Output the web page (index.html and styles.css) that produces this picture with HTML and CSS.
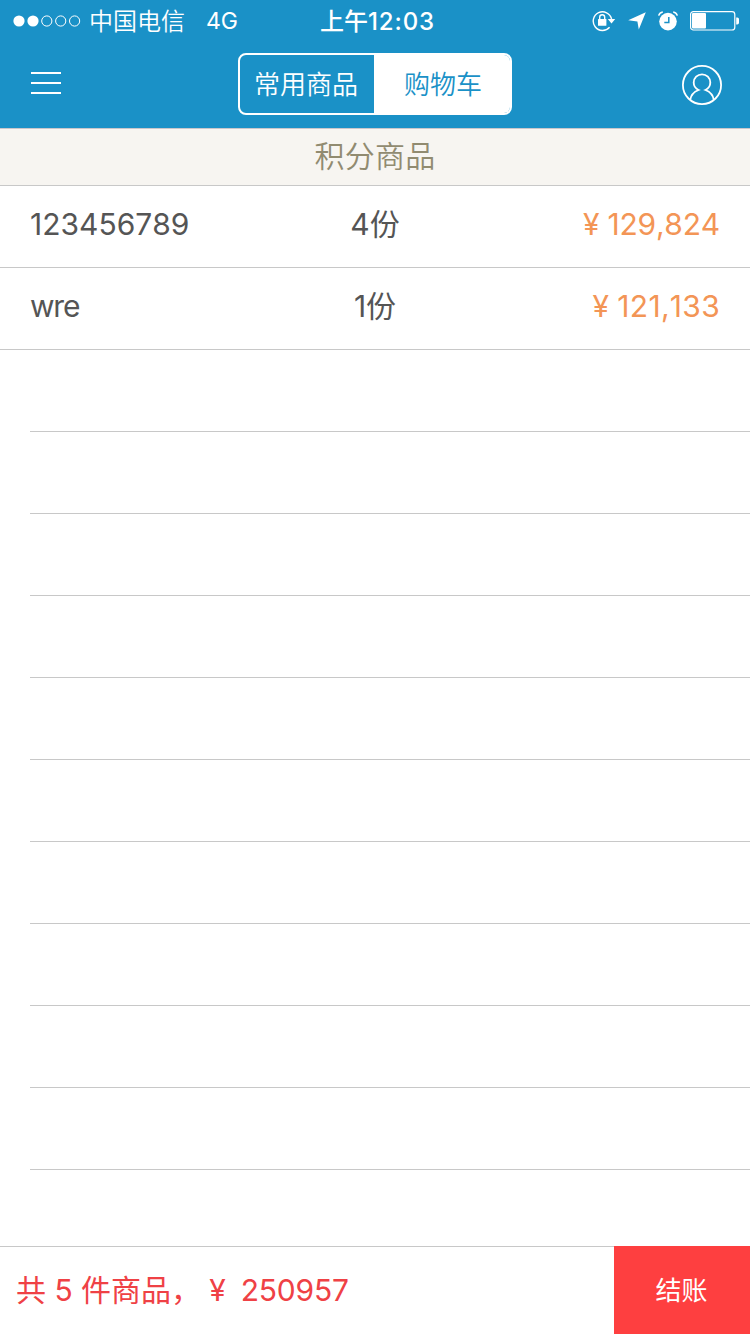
FILE: index.html
```
<!DOCTYPE html>
<html lang="zh-CN">
<head>
    <meta charset="UTF-8">
    <meta name="viewport" content="width=device-width, initial-scale=1.0">
    <title>购物车</title>
    <link rel="stylesheet" href="styles.css">
</head>
<body>
    <header class="header">
        <div class="status-bar">
            <div class="status-left">
                <svg class="signal" width="68" height="12" viewBox="0 0 68 12" fill="none" stroke="#fff">
                    <circle cx="6" cy="6" r="5.6" fill="#fff" stroke="none"/>
                    <circle cx="20" cy="6" r="5.6" fill="#fff" stroke="none"/>
                    <circle cx="33.8" cy="6" r="5.1"/>
                    <circle cx="47.7" cy="6" r="5.1"/>
                    <circle cx="61.6" cy="6" r="5.1"/>
                </svg>
                <span class="carrier">中国电信</span>
                <span class="network">4G</span>
            </div>
            <div class="time">上午<span class="clock">12:03</span></div>
            <div class="status-right">
                <svg class="icon-lock" width="24" height="22" viewBox="0 0 24 22">
                    <path d="M17.6 17.2A9.3 9.3 0 1 1 19.6 9" fill="none" stroke="#fff" stroke-width="1.4"/>
                    <path d="M15.8 9h7.4l-3.7 4.4z" fill="#fff"/>
                    <rect x="6" y="9" width="8.4" height="6.8" rx="0.6" fill="#fff"/>
                    <path d="M7.7 9.5V7.2a2.5 2.5 0 0 1 5 0v2.3" fill="none" stroke="#fff" stroke-width="1.4"/>
                </svg>
                <svg class="icon-location" width="18" height="18" viewBox="0 0 18 18">
                    <path d="M17.8 0.2L10.8 17.6L9.4 9.4L0.2 8.2z" fill="#fff"/>
                </svg>
                <svg class="icon-alarm" width="20" height="20" viewBox="0 0 20 20">
                    <circle cx="10" cy="10.6" r="8.8" fill="#fff"/>
                    <path d="M0.7 4.6A5 5 0 0 1 4.8 1.1M19.3 4.6A5 5 0 0 0 15.2 1.1" fill="none" stroke="#fff" stroke-width="1.5"/>
                    <path d="M10.8 6v5.4H6.3" fill="none" stroke="#1a91c7" stroke-width="1.5"/>
                </svg>
                <svg class="icon-battery" width="50" height="20" viewBox="0 0 50 20">
                    <rect x="0.6" y="0.6" width="44.2" height="18.4" rx="2.8" fill="none" stroke="#fff" stroke-width="1.2"/>
                    <rect x="2" y="2" width="14" height="15.4" rx="1" fill="#fff"/>
                    <path d="M46.2 6.4h1.1a1.7 1.7 0 0 1 1.7 1.7v3.6a1.7 1.7 0 0 1-1.7 1.7h-1.1z" fill="#fff"/>
                </svg>
            </div>
        </div>
        <nav class="nav">
            <div class="menu">
                <span></span>
                <span></span>
                <span></span>
            </div>
            <div class="tabs">
                <div class="tab">常用商品</div>
                <div class="tab active">购物车</div>
            </div>
            <svg class="avatar" width="40" height="40" viewBox="0 0 40 40" fill="none" stroke="#fff" stroke-width="1.8">
                <circle cx="20" cy="20" r="19.1"/>
                <path d="M8.2 35C8.8 30.2 11.5 27 16.6 25C13.2 23.4 11.7 20.8 11.7 17.6A8.3 8.3 0 0 1 28.3 17.6C28.3 20.8 26.8 23.4 23.4 25C28.5 27 31.2 30.2 31.8 35"/>
            </svg>
        </nav>
    </header>
    <main class="content">
        <div class="section-title">积分商品</div>
        <ul class="list">
            <li class="item">
                <span class="name">123456789</span>
                <span class="count">4份</span>
                <span class="price"><i class="yen">¥</i>129,824</span>
            </li>
            <li class="item">
                <span class="name latin">wre</span>
                <span class="count">1份</span>
                <span class="price wide"><i class="yen">¥</i>121,133</span>
            </li>
            <li class="item empty"></li>
            <li class="item empty"></li>
            <li class="item empty"></li>
            <li class="item empty"></li>
            <li class="item empty"></li>
            <li class="item empty"></li>
            <li class="item empty"></li>
            <li class="item empty"></li>
            <li class="item empty"></li>
            <li class="item empty"></li>
        </ul>
    </main>
    <footer class="footer">
        <div class="summary"><span>共 5 件商品，</span><i class="yen">¥</i><span class="total">250957</span></div>
        <div class="checkout">结账</div>
    </footer>
</body>
</html>
```
FILE: styles.css
```
* {
    box-sizing: border-box;
}
body {
    margin: 0;
    width: 750px;
    height: 1334px;
    display: flex;
    flex-direction: column;
    overflow: hidden;
    font-family: Inter, "Noto Sans CJK SC", sans-serif;
    font-size: 30px;
    font-kerning: none;
    color: #555;
    background-color: #fff;
}
svg {
    display: block;
    flex: none;
}
.header {
    height: 128px;
    color: #fff;
    background-color: #1a91c7;
}
.status-bar {
    height: 40px;
    padding: 1px 10px 0 13px;
    display: grid;
    grid-template-columns: 1fr auto 1fr;
    align-items: center;
    font-size: 24px;
    font-weight: 350;
    line-height: 37px;
}
.status-left {
    display: flex;
    align-items: center;
}
.carrier {
    margin-left: 8px;
    padding-top: 2px;
}
.network {
    margin-left: 21px;
    padding-top: 1px;
    font-size: 23px;
    font-weight: 400;
}
.time {
    padding: 2px 0 0 2px;
    font-weight: 500;
}
.clock {
    letter-spacing: 0.9px;
}
.status-right {
    display: flex;
    align-items: center;
    justify-content: flex-end;
}
.icon-location {
    margin-left: 12px;
}
.icon-alarm {
    margin-left: 12px;
}
.icon-battery {
    margin-left: 12px;
}
.nav {
    height: 88px;
    padding: 0 28px;
    display: grid;
    grid-template-columns: 1fr auto 1fr;
    align-items: center;
}
.menu {
    width: 33px;
    padding: 0 0 2px 3px;
    display: flex;
    flex-direction: column;
    gap: 8px;
}
.menu span {
    height: 2px;
    background-color: #fff;
}
.tabs {
    width: 274px;
    height: 62px;
    display: flex;
    border: 2px solid #fff;
    border-radius: 8px;
    overflow: hidden;
}
.tab {
    width: 134px;
    padding-right: 2px;
    text-align: center;
    font-size: 26px;
    font-weight: 350;
    line-height: 60px;
}
.tab.active {
    flex: 1;
    padding: 0 0 0 2px;
    color: #1a91c7;
    background-color: #fff;
}
.avatar {
    margin-top: 2px;
    justify-self: end;
}
.content {
    flex: 1;
}
.section-title {
    height: 58px;
    border-top: 1px solid #c8c7cc;
    border-bottom: 1px solid #c8c8c8;
    text-align: center;
    font-weight: 350;
    letter-spacing: 0.3px;
    line-height: 54px;
    color: #918b70;
    background-color: #f7f5f1;
}
.list {
    margin: 0;
    padding: 0;
    list-style: none;
}
.item {
    height: 82px;
    padding: 0 30px;
    display: grid;
    grid-template-columns: 1fr auto 1fr;
    align-items: baseline;
    line-height: 77px;
    border-bottom: 1px solid #c8c8c8;
}
.item.empty {
    margin-left: 30px;
}
.latin {
    letter-spacing: -1.4px;
}
.price {
    text-align: right;
    letter-spacing: -0.2px;
    color: #f39556;
}
.price.wide {
    letter-spacing: 0.3px;
}
.yen {
    margin-right: 8px;
    font-style: normal;
}
.footer {
    height: 88px;
    display: flex;
}
.summary {
    flex: 1;
    padding-left: 16px;
    display: flex;
    border-top: 1px solid #c8c8c8;
    line-height: 87px;
    color: #ef4145;
}
.summary .yen {
    margin: 0 15px 0 8px;
}
.total {
    letter-spacing: -0.2px;
}
.checkout {
    width: 136px;
    padding-right: 1px;
    text-align: center;
    font-size: 26px;
    line-height: 90px;
    color: #fff;
    background-color: #fe3f40;
}
```
